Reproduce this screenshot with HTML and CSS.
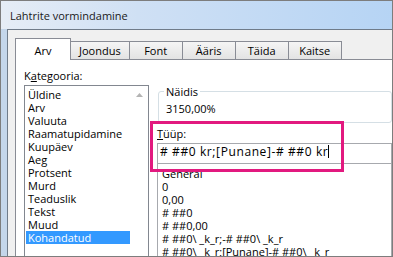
FILE: index.html
```html
<!DOCTYPE html>
<html lang="et">

<head>
    <meta charset="UTF-8">
    <meta name="viewport" content="width=device-width, initial-scale=1.0">
    <title>Lahtrite vormindamine</title>
    <link rel="stylesheet" href="styles.css">
</head>

<body>
    <div class="screen">
        <div class="titlebar">Lahtrite vormindamine</div>
        <div class="window">
            <div class="frame-side"></div>
            <div class="client">
                <div class="tabs">
                    <div class="tab active">Arv</div>
                    <div class="tab">Joondus</div>
                    <div class="tab">Font</div>
                    <div class="tab">Ääris</div>
                    <div class="tab">Täida</div>
                    <div class="tab">Kaitse</div>
                </div>
                <div class="panel">
                    <div class="category">
                        <div class="field-label">K<u>a</u>tegooria:</div>
                        <div class="listbox">
                            <ul class="items">
                                <li>Üldine</li>
                                <li>Arv</li>
                                <li>Valuuta</li>
                                <li>Raamatupidamine</li>
                                <li>Kuupäev</li>
                                <li>Aeg</li>
                                <li>Protsent</li>
                                <li>Murd</li>
                                <li>Teaduslik</li>
                                <li>Tekst</li>
                                <li>Muud</li>
                                <li class="selected">Kohandatud</li>
                            </ul>
                            <div class="scrollbar">
                                <svg width="7" height="4" viewBox="0 0 7 4">
                                    <path d="M0 4 L3.5 0 L7 4 Z" fill="#b4b4b4"/>
                                </svg>
                            </div>
                        </div>
                    </div>
                    <div class="details">
                        <fieldset class="sample">
                            <legend>Näidis</legend>
                            <div>3150,00%</div>
                        </fieldset>
                        <div class="field-label type-label"><u>T</u>üüp:</div>
                        <div class="type-input"># ##0 kr;[Punane]-# ##0 kr<span class="caret"></span></div>
                        <ul class="formats">
                            <li>General</li>
                            <li>0</li>
                            <li>0,00</li>
                            <li># ##0</li>
                            <li># ##0,00</li>
                            <li># ##0\ _k_r;-# ##0\ _k_r</li>
                            <li># ##0\ _k_r;[Punane]-# ##0\ _k_r</li>
                            <li># ##0,00\ _k_r;-# ##0,00\ _k_r</li>
                        </ul>
                    </div>
                </div>
            </div>
        </div>
        <div class="callout"></div>
    </div>
</body>

</html>
```

FILE: styles.css
```css
body {
    margin: 0;
    font-family: "Open Sans", "Noto Sans", sans-serif;
    font-size: 11px;
    line-height: 13px;
    color: #000;
}

.screen {
    position: relative;
    width: 393px;
    height: 257px;
    box-sizing: border-box;
    border: 1px solid #7d7d7d;
    overflow: hidden;
    display: flex;
    flex-direction: column;
    background-color: #c4d6ea;
}

.titlebar {
    height: 28px;
    flex: none;
    box-sizing: border-box;
    padding: 8px 0 0 9px;
    color: #1a1a1a;
    background: linear-gradient(to right, #e6edf6 0%, #cfe0f4 35%, #b6d4f4 100%);
}

.window {
    flex: 1;
    display: flex;
    min-height: 0;
}

.frame-side {
    width: 6px;
    flex: none;
}

.client {
    flex: 1;
    display: flex;
    flex-direction: column;
    min-width: 0;
    padding: 8px 0 0 7px;
    background-color: #f0f0f0;
    border-top: 1px solid #6f7b89;
    border-left: 1px solid #6f7b89;
}

/* tab strip */
.tabs {
    display: flex;
    align-items: flex-end;
}

.tab {
    height: 18px;
    min-width: 54px;
    box-sizing: border-box;
    padding: 2px 8px 0;
    margin: 0 -1px 1px 0;
    border: 1px solid #898c95;
    border-bottom: 0;
    background: linear-gradient(#f5f5f5, #e3e3e3);
    text-align: center;
}

.tab.active {
    position: relative;
    z-index: 1;
    height: 22px;
    min-width: 56px;
    padding-top: 5px;
    margin-bottom: 0;
    background: #fff;
}

.panel {
    flex: 1;
    display: flex;
    margin-top: -1px;
    background-color: #fff;
    border-top: 1px solid #898c95;
    border-left: 1px solid #898c95;
}

.field-label {
    margin-bottom: 3px;
}

/* category list */
.category {
    width: 125px;
    flex: none;
    padding: 9px 0 0 8px;
}

.listbox {
    display: flex;
    height: 190px;
    border: 1px solid #828790;
}

.items {
    flex: 1;
    list-style: none;
    margin: 0;
    padding: 2px 0 0 1px;
}

.items li {
    padding-left: 2px;
}

.items li.selected {
    background-color: #3399ff;
    color: #fff;
}

.scrollbar {
    width: 17px;
    flex: none;
    display: flex;
    justify-content: center;
    align-items: flex-start;
    padding: 7px 0 0 1px;
}

.scrollbar svg {
    display: block;
}

/* right side */
.details {
    flex: 1;
    min-width: 0;
    padding: 25px 0 0 8px;
}

.sample {
    min-width: 0;
    margin: 0 0 0 1px;
    padding: 4px 6px 7px 7px;
    border: 1px solid #d5dfe5;
    border-radius: 3px;
}

.sample legend {
    margin-left: -2px;
    padding: 0 2px;
}

.type-label {
    margin-top: 4px;
}

.type-input {
    padding: 1px 0 5px 2px;
    border: 1px solid #a7a9ae;
    font-size: 12px;
    letter-spacing: 0.6px;
    white-space: nowrap;
}

.caret {
    display: inline-block;
    width: 1px;
    height: 13px;
    vertical-align: top;
    background-color: #000;
}

.formats {
    list-style: none;
    height: 120px;
    margin: 0;
    padding: 3px 0 0 4px;
    border: 1px solid #a7a9ae;
    border-top: 0;
    white-space: nowrap;
}

/* annotation frame drawn over the dialog */
.callout {
    position: absolute;
    left: 149px;
    top: 120px;
    width: 194px;
    height: 51px;
    box-sizing: border-box;
    border: 3px solid #e2197f;
}
```
